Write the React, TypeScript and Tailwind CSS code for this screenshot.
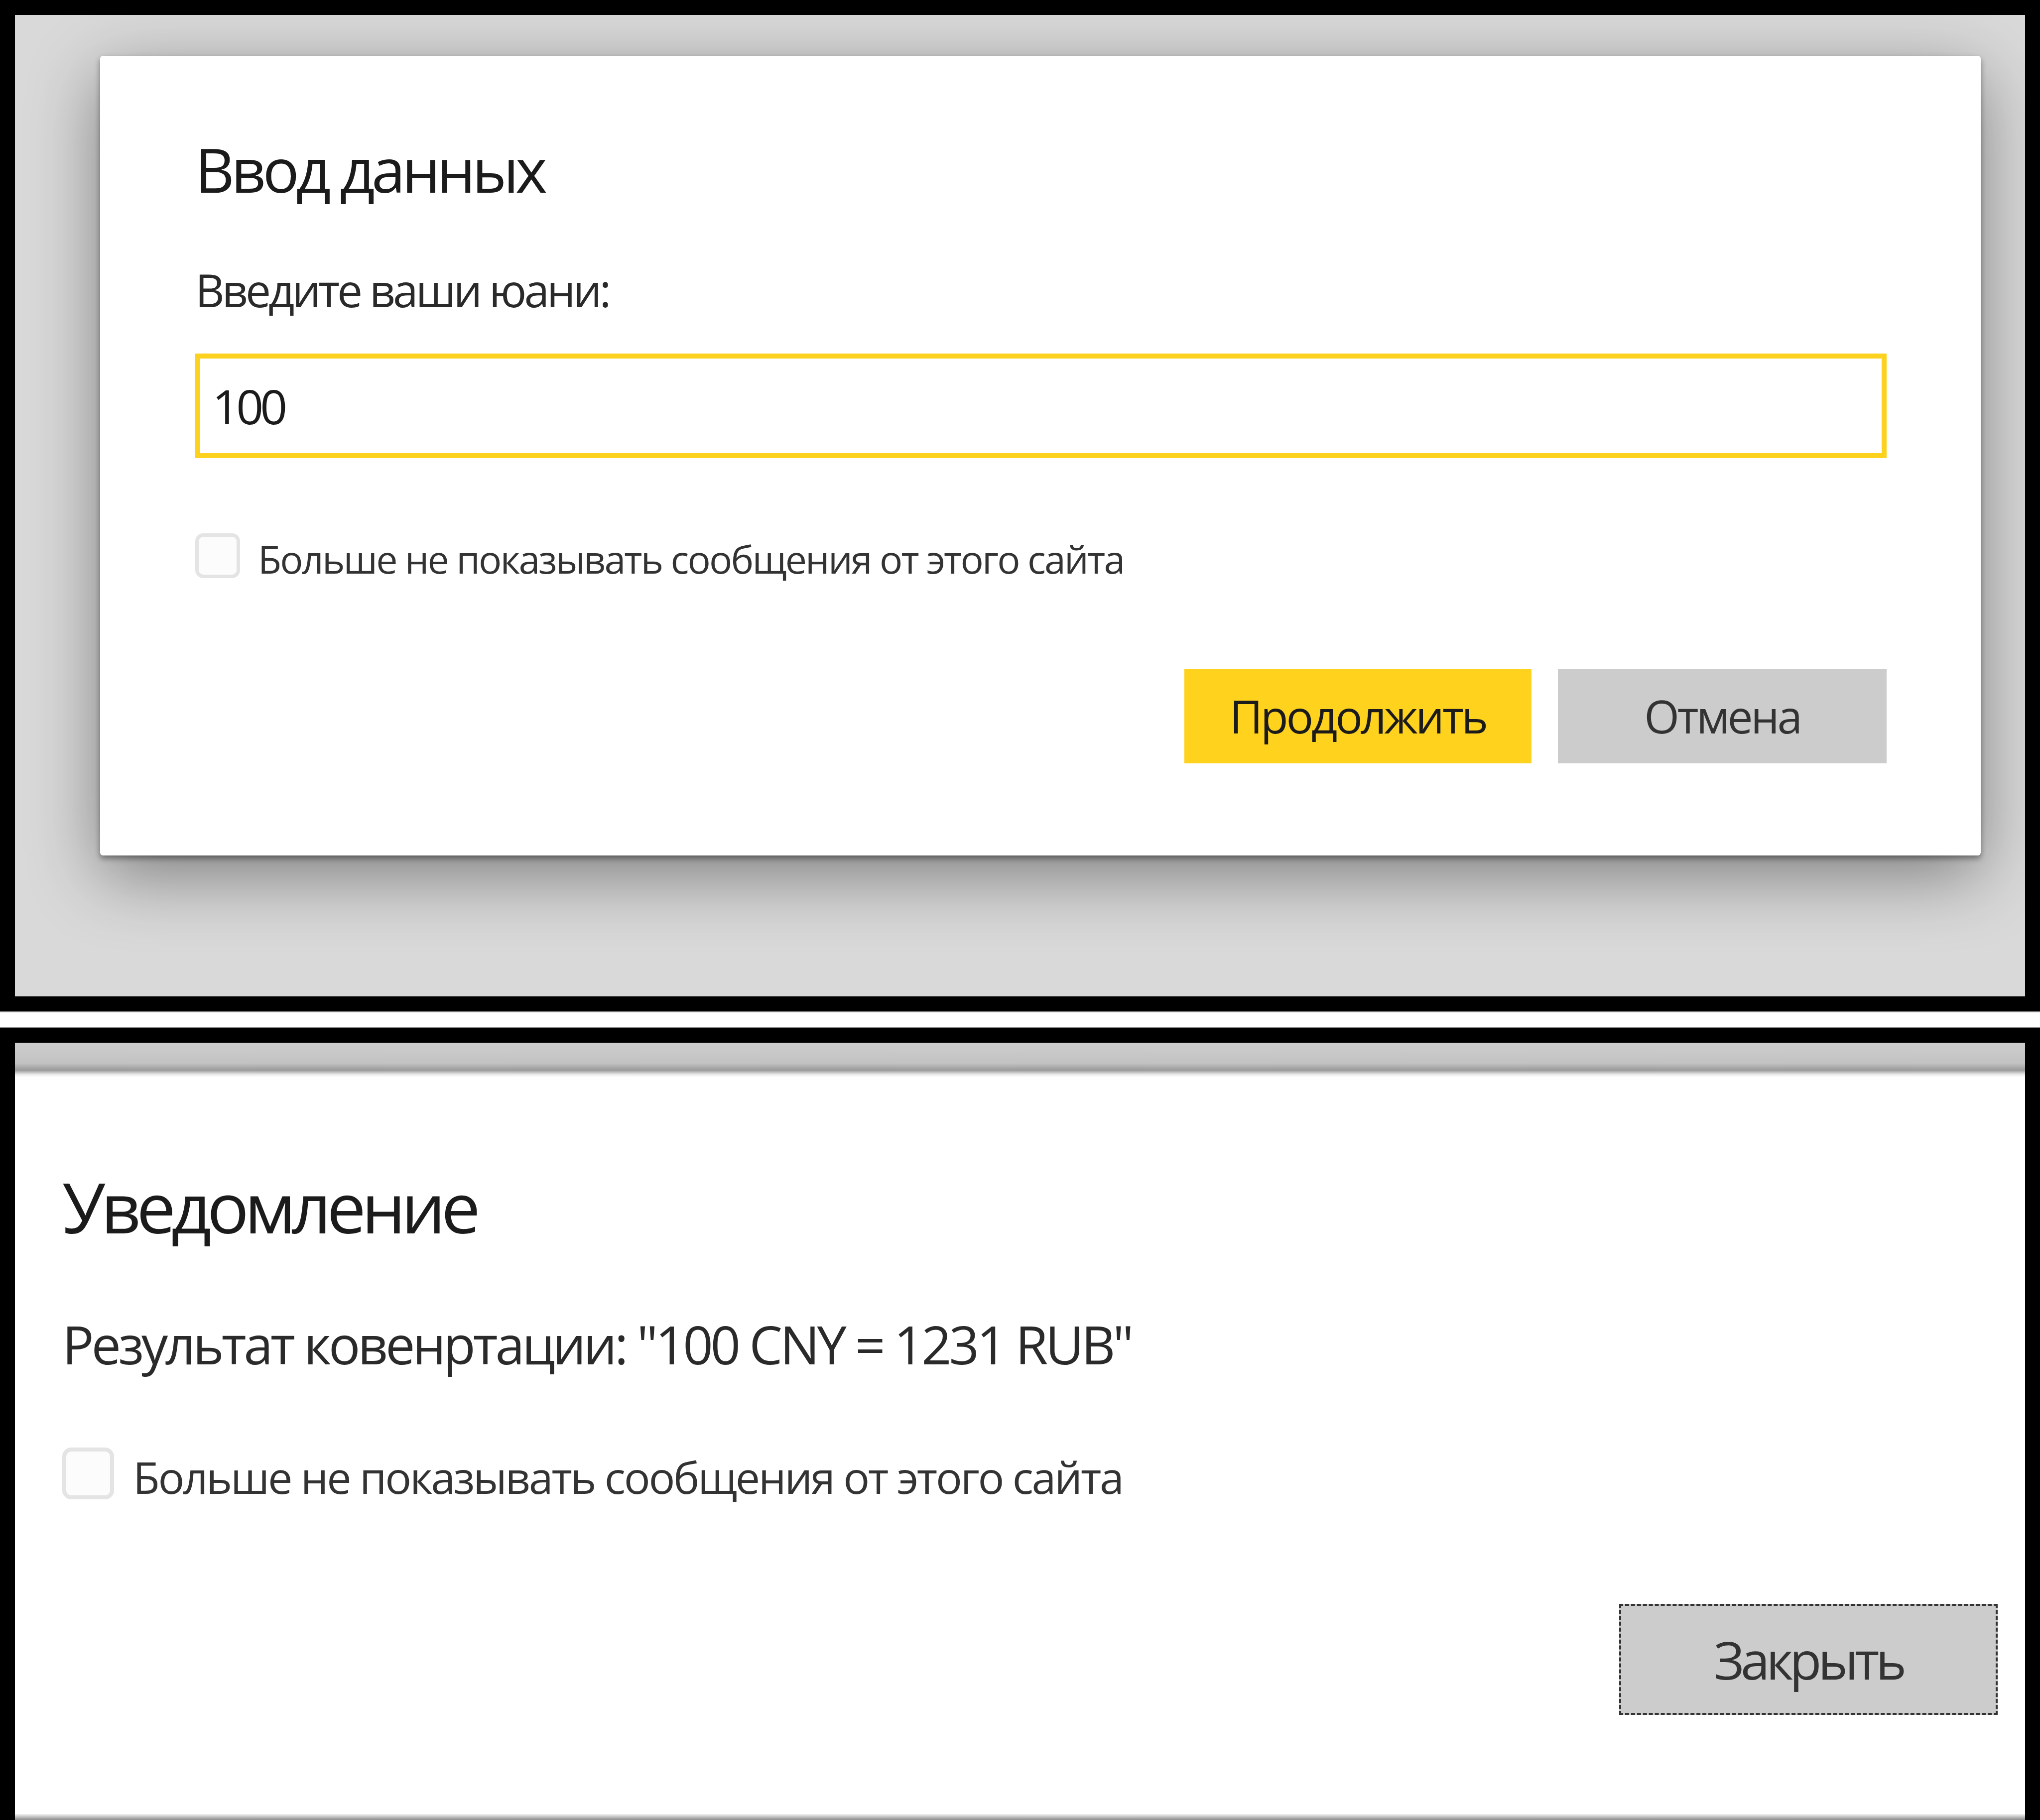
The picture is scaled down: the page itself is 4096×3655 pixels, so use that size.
import React from "react";

function Checkbox({ size, border, radius }: { size: string; border: string; radius: string }) {
  return <div className={`${size} ${border} ${radius} shrink-0 border-[#e4e4e4] bg-[#fcfcfc]`} />;
}

export default function App() {
  return (
    <div className="w-[4096px] h-[3655px] bg-white flex flex-col font-['Open_Sans','Noto_Sans',sans-serif] overflow-hidden">
      {/* Top screenshot */}
      <div className="h-[2031px] shrink-0 bg-black px-[30px] pt-[30px] pb-[30px] flex">
        <div className="flex-1 bg-[#d9d9d9] pl-[171px] pr-[89px] pt-[82px]">
          <div className="w-[3776px] h-[1606px] bg-white rounded-[6px] shadow-[0_6px_12px_rgba(0,0,0,0.4),0_40px_140px_rgba(0,0,0,0.42)] pl-[191px] pr-[189px] pt-[167px] flex flex-col">
            <div className="text-[122px] leading-none tracking-[-0.055em] text-[#1b1b1b]">Ввод данных</div>
            <div className="mt-[136px] text-[91px] leading-none tracking-[-0.055em] text-[#2a2a2a]">Введите ваши юани:</div>
            <div className="mt-[82px] h-[210px] border-[10px] border-[#fcd21f] flex items-center pl-[24px]">
              <span className="text-[96px] leading-none tracking-[-0.07em] text-[#1b1b1b]">100</span>
            </div>
            <div className="mt-[150px] flex items-center gap-[36px]">
              <Checkbox size="w-[90px] h-[90px]" border="border-[7px]" radius="rounded-[16px]" />
              <span className="text-[77px] leading-none tracking-[-0.037em] text-[#333] mt-[14px]">Больше не показывать сообщения от этого сайта</span>
            </div>
            <div className="mt-[182px] flex justify-end gap-[53px]">
              <div className="w-[697px] h-[190px] bg-[#ffd21e] flex items-center justify-center text-[91px] leading-none tracking-[-0.046em] text-[#1b1b1b]">Продолжить</div>
              <div className="w-[660px] h-[190px] bg-[#cccccc] flex items-center justify-center text-[91px] leading-none tracking-[-0.048em] text-[#333]">Отмена</div>
            </div>
          </div>
        </div>
      </div>
      {/* Separator */}
      <div className="h-[33px] shrink-0 bg-white border-y-[2px] border-[#8a8a8a]" />
      {/* Bottom screenshot */}
      <div className="flex-1 bg-black px-[30px] pt-[30px] flex">
        <div className="flex-1 bg-white flex flex-col">
          <div className="h-[69px] shrink-0 bg-[linear-gradient(to_bottom,#cecece_0%,#c2c2c2_60%,#9a9a9a_80%,#e8e8e8_92%,#ffffff_100%)]" />
          <div className="flex-1 pl-[95px] pr-[55px] pt-[190px] flex flex-col">
            <div className="text-[140px] leading-none tracking-[-0.063em] text-[#1b1b1b]">Уведомление</div>
            <div className="mt-[153px] text-[106px] leading-none tracking-[-0.049em] text-[#2a2a2a]">Результат ковенртации: "100 CNY = 1231 RUB"</div>
            <div className="mt-[155px] flex items-center gap-[38px]">
              <Checkbox size="w-[104px] h-[104px]" border="border-[8px]" radius="rounded-[18px]" />
              <span className="text-[88px] leading-none tracking-[-0.037em] text-[#333] mt-[14px]">Больше не показывать сообщения от этого сайта</span>
            </div>
            <div className="mt-[210px] flex justify-end">
              <div className="w-[760px] h-[223px] bg-[#cccccc] border-[4px] border-dashed border-[#333] flex items-center justify-center text-[105px] leading-none tracking-[-0.068em] text-[#333]">Закрыть</div>
            </div>
          </div>
          <div className="h-[12px] shrink-0 bg-[linear-gradient(to_bottom,#f4f4f4,#8a8a8a)]" />
        </div>
      </div>
    </div>
  );
}
